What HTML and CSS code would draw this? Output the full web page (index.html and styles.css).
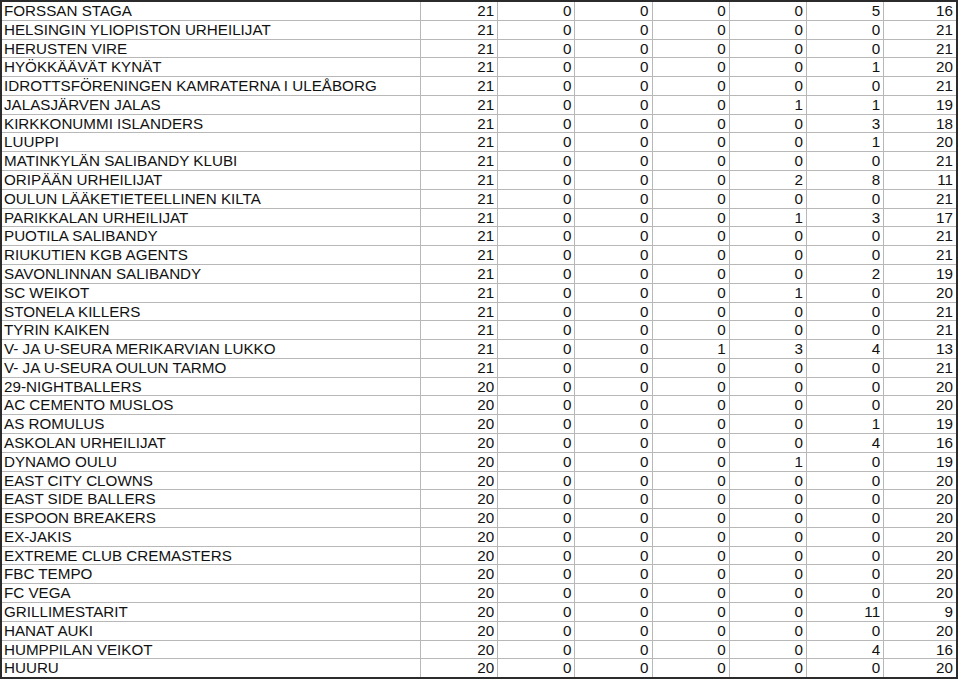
FILE: index.html
```html
<!DOCTYPE html>
<html lang="fi">
<head>
<meta charset="utf-8">
<title>Sarjataulukko</title>
<link rel="stylesheet" href="styles.css">
</head>
<body>
<table class="standings">
<colgroup>
<col class="c-name"><col class="c-num"><col class="c-num"><col class="c-num"><col class="c-num"><col class="c-num"><col class="c-num"><col>
</colgroup>
<tbody>
<tr><td>FORSSAN STAGA</td><td>21</td><td>0</td><td>0</td><td>0</td><td>0</td><td>5</td><td>16</td></tr>
<tr><td>HELSINGIN YLIOPISTON URHEILIJAT</td><td>21</td><td>0</td><td>0</td><td>0</td><td>0</td><td>0</td><td>21</td></tr>
<tr><td>HERUSTEN VIRE</td><td>21</td><td>0</td><td>0</td><td>0</td><td>0</td><td>0</td><td>21</td></tr>
<tr><td>HYÖKKÄÄVÄT KYNÄT</td><td>21</td><td>0</td><td>0</td><td>0</td><td>0</td><td>1</td><td>20</td></tr>
<tr><td>IDROTTSFÖRENINGEN KAMRATERNA I ULEÅBORG</td><td>21</td><td>0</td><td>0</td><td>0</td><td>0</td><td>0</td><td>21</td></tr>
<tr><td>JALASJÄRVEN JALAS</td><td>21</td><td>0</td><td>0</td><td>0</td><td>1</td><td>1</td><td>19</td></tr>
<tr><td>KIRKKONUMMI ISLANDERS</td><td>21</td><td>0</td><td>0</td><td>0</td><td>0</td><td>3</td><td>18</td></tr>
<tr><td>LUUPPI</td><td>21</td><td>0</td><td>0</td><td>0</td><td>0</td><td>1</td><td>20</td></tr>
<tr><td>MATINKYLÄN SALIBANDY KLUBI</td><td>21</td><td>0</td><td>0</td><td>0</td><td>0</td><td>0</td><td>21</td></tr>
<tr><td>ORIPÄÄN URHEILIJAT</td><td>21</td><td>0</td><td>0</td><td>0</td><td>2</td><td>8</td><td>11</td></tr>
<tr><td>OULUN LÄÄKETIETEELLINEN KILTA</td><td>21</td><td>0</td><td>0</td><td>0</td><td>0</td><td>0</td><td>21</td></tr>
<tr><td>PARIKKALAN URHEILIJAT</td><td>21</td><td>0</td><td>0</td><td>0</td><td>1</td><td>3</td><td>17</td></tr>
<tr><td>PUOTILA SALIBANDY</td><td>21</td><td>0</td><td>0</td><td>0</td><td>0</td><td>0</td><td>21</td></tr>
<tr><td>RIUKUTIEN KGB AGENTS</td><td>21</td><td>0</td><td>0</td><td>0</td><td>0</td><td>0</td><td>21</td></tr>
<tr><td>SAVONLINNAN SALIBANDY</td><td>21</td><td>0</td><td>0</td><td>0</td><td>0</td><td>2</td><td>19</td></tr>
<tr><td>SC WEIKOT</td><td>21</td><td>0</td><td>0</td><td>0</td><td>1</td><td>0</td><td>20</td></tr>
<tr><td>STONELA KILLERS</td><td>21</td><td>0</td><td>0</td><td>0</td><td>0</td><td>0</td><td>21</td></tr>
<tr><td>TYRIN KAIKEN</td><td>21</td><td>0</td><td>0</td><td>0</td><td>0</td><td>0</td><td>21</td></tr>
<tr><td>V- JA U-SEURA MERIKARVIAN LUKKO</td><td>21</td><td>0</td><td>0</td><td>1</td><td>3</td><td>4</td><td>13</td></tr>
<tr><td>V- JA U-SEURA OULUN TARMO</td><td>21</td><td>0</td><td>0</td><td>0</td><td>0</td><td>0</td><td>21</td></tr>
<tr><td>29-NIGHTBALLERS</td><td>20</td><td>0</td><td>0</td><td>0</td><td>0</td><td>0</td><td>20</td></tr>
<tr><td>AC CEMENTO MUSLOS</td><td>20</td><td>0</td><td>0</td><td>0</td><td>0</td><td>0</td><td>20</td></tr>
<tr><td>AS ROMULUS</td><td>20</td><td>0</td><td>0</td><td>0</td><td>0</td><td>1</td><td>19</td></tr>
<tr><td>ASKOLAN URHEILIJAT</td><td>20</td><td>0</td><td>0</td><td>0</td><td>0</td><td>4</td><td>16</td></tr>
<tr><td>DYNAMO OULU</td><td>20</td><td>0</td><td>0</td><td>0</td><td>1</td><td>0</td><td>19</td></tr>
<tr><td>EAST CITY CLOWNS</td><td>20</td><td>0</td><td>0</td><td>0</td><td>0</td><td>0</td><td>20</td></tr>
<tr><td>EAST SIDE BALLERS</td><td>20</td><td>0</td><td>0</td><td>0</td><td>0</td><td>0</td><td>20</td></tr>
<tr><td>ESPOON BREAKERS</td><td>20</td><td>0</td><td>0</td><td>0</td><td>0</td><td>0</td><td>20</td></tr>
<tr><td>EX-JAKIS</td><td>20</td><td>0</td><td>0</td><td>0</td><td>0</td><td>0</td><td>20</td></tr>
<tr><td>EXTREME CLUB CREMASTERS</td><td>20</td><td>0</td><td>0</td><td>0</td><td>0</td><td>0</td><td>20</td></tr>
<tr><td>FBC TEMPO</td><td>20</td><td>0</td><td>0</td><td>0</td><td>0</td><td>0</td><td>20</td></tr>
<tr><td>FC VEGA</td><td>20</td><td>0</td><td>0</td><td>0</td><td>0</td><td>0</td><td>20</td></tr>
<tr><td>GRILLIMESTARIT</td><td>20</td><td>0</td><td>0</td><td>0</td><td>0</td><td>11</td><td>9</td></tr>
<tr><td>HANAT AUKI</td><td>20</td><td>0</td><td>0</td><td>0</td><td>0</td><td>0</td><td>20</td></tr>
<tr><td>HUMPPILAN VEIKOT</td><td>20</td><td>0</td><td>0</td><td>0</td><td>0</td><td>4</td><td>16</td></tr>
<tr><td>HUURU</td><td>20</td><td>0</td><td>0</td><td>0</td><td>0</td><td>0</td><td>20</td></tr>
</tbody>
</table>
</body>
</html>
```

FILE: styles.css
```css
html, body {
  margin: 0;
  padding: 0;
  background: #ffffff;
}

.standings {
  width: 958px;
  table-layout: fixed;
  border-collapse: separate;
  border-spacing: 0;
  border: 2px solid #2b2b2b;
  font-family: "Liberation Sans", Arial, sans-serif;
  font-size: 15.2px;
  color: #111111;
}

.c-name { width: 419px; }
.c-num { width: 77.2px; }

.standings td {
  box-sizing: border-box;
  height: 18.78px;
  padding: 0 3px 0 3px;
  line-height: 17.78px;
  text-align: right;
  white-space: nowrap;
  border-right: 1px solid #b8b8b8;
  border-bottom: 1px solid #b8b8b8;
  vertical-align: middle;
}

.standings td:first-child {
  text-align: left;
  padding-left: 2px;
}

.standings td:last-child {
  border-right: none;
}

.standings tr:last-child td {
  border-bottom: none;
  height: 17.78px;
}
```
